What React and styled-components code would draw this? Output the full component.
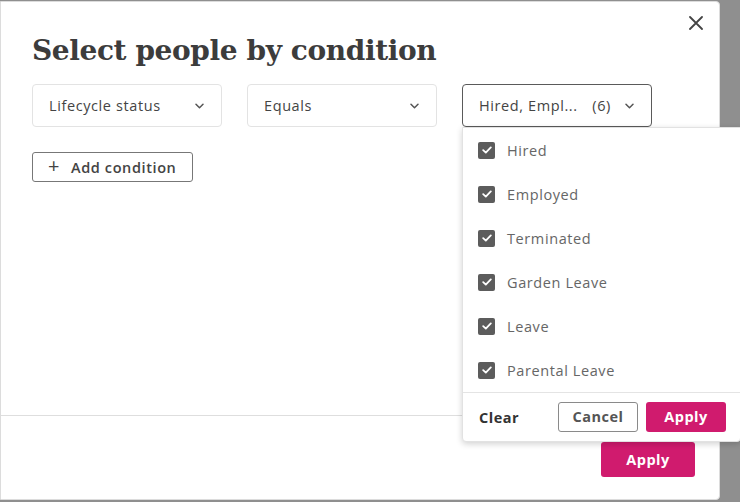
import React from "react";
import styled, { createGlobalStyle } from "styled-components";

const GlobalStyle = createGlobalStyle`
    html, body {
        margin: 0;
        padding: 0;
        background: #8f8f8f;
        font-family: "Open Sans", "Liberation Sans", sans-serif;
    }
    * {
        box-sizing: border-box;
    }
`;

const statuses = [
    "Hired",
    "Employed",
    "Terminated",
    "Garden Leave",
    "Leave",
    "Parental Leave",
];

const Chevron = () => (
    <svg width="9" height="6" viewBox="0 0 9 6" fill="none">
        <path
            d="M1 1.2l3.5 3.5 3.5-3.5"
            stroke="#555"
            strokeWidth="1.5"
            strokeLinecap="round"
            strokeLinejoin="round"
        />
    </svg>
);

const CloseIcon = () => (
    <svg width="14" height="14" viewBox="0 0 14 14" fill="none">
        <path
            d="M1 1l12 12M13 1L1 13"
            stroke="#444"
            strokeWidth="1.8"
            strokeLinecap="round"
        />
    </svg>
);

const Check = () => (
    <svg width="10" height="8" viewBox="0 0 10 8" fill="none">
        <path
            d="M1.2 4.2l2.6 2.4L8.8 1.4"
            stroke="#fff"
            strokeWidth="1.8"
            strokeLinecap="round"
            strokeLinejoin="round"
        />
    </svg>
);

const App = () => {
    return (
        <Page>
            <GlobalStyle />
            <Modal>
                <CloseBtn>
                    <CloseIcon />
                </CloseBtn>
                <Body>
                    <Title>Select people by condition</Title>
                    <Conditions>
                        <Select>
                            <span>Lifecycle status</span>
                            <Chevron />
                        </Select>
                        <Select>
                            <span>Equals</span>
                            <Chevron />
                        </Select>
                        <SelectWrap>
                            <Select open>
                                <span>Hired, Empl...</span>
                                <Count>(6)</Count>
                                <Chevron />
                            </Select>
                            <Popup>
                                <List>
                                    {statuses.map(s => (
                                        <Item key={s}>
                                            <Box>
                                                <Check />
                                            </Box>
                                            {s}
                                        </Item>
                                    ))}
                                </List>
                                <PopupFooter>
                                    <TextBtn>Clear</TextBtn>
                                    <BtnGroup>
                                        <OutlineBtn>Cancel</OutlineBtn>
                                        <PrimaryBtn small>Apply</PrimaryBtn>
                                    </BtnGroup>
                                </PopupFooter>
                            </Popup>
                        </SelectWrap>
                    </Conditions>
                    <AddBtn>
                        <Plus>+</Plus> Add condition
                    </AddBtn>
                </Body>
                <Footer>
                    <PrimaryBtn>Apply</PrimaryBtn>
                </Footer>
            </Modal>
        </Page>
    );
};

const Page = styled.div`
    width: 740px;
    height: 502px;
    padding-top: 1px;
    overflow: hidden;
`;

const Modal = styled.div`
    position: relative;
    width: 720px;
    height: 499px;
    background: #fff;
    border: 1px solid #dcdcdc;
    border-radius: 0 4px 4px 0;
    display: flex;
    flex-direction: column;
`;

const CloseBtn = styled.button`
    all: unset;
    position: absolute;
    top: 14px;
    right: 16px;
    width: 14px;
    height: 14px;
    display: flex;
    cursor: pointer;
`;

const Body = styled.div`
    flex: 1;
    padding: 31px 0 0 31px;
`;

const Title = styled.h1`
    margin: 0;
    font-family: "DejaVu Serif", "Liberation Serif", serif;
    font-weight: 700;
    font-size: 28px;
    line-height: 36px;
    color: #3c3c3c;
    letter-spacing: -0.4px;
`;

const Conditions = styled.div`
    display: flex;
    gap: 25px;
    margin-top: 15px;
`;

const SelectWrap = styled.div`
    position: relative;
`;

const Select = styled.div`
    width: 190px;
    height: 43px;
    padding: 0 17px 0 16px;
    display: flex;
    align-items: center;
    border: 1px solid ${props => (props.open ? "#5a5a5a" : "#e3e3e3")};
    border-radius: 4px;
    font-size: 14.5px;
    letter-spacing: 0.6px;
    color: #444;
    & > span:first-child {
        flex: 1;
        white-space: nowrap;
    }
`;

const Count = styled.span`
    margin-right: 14px;
`;

const Popup = styled.div`
    position: absolute;
    top: 100%;
    left: 0;
    width: 279px;
    background: #fff;
    border: 1px solid #e2e2e2;
    border-radius: 0 0 4px 4px;
    box-shadow: 0 2px 6px rgba(0, 0, 0, 0.18);
    z-index: 2;
`;

const List = styled.div`
    border-bottom: 1px solid #e4e4e4;
`;

const Item = styled.div`
    height: 44px;
    padding-left: 15px;
    display: flex;
    align-items: center;
    gap: 12px;
    font-size: 14.5px;
    letter-spacing: 0.6px;
    color: #666;
`;

const Box = styled.span`
    width: 17px;
    height: 17px;
    border-radius: 2px;
    background: #5c5c5c;
    display: flex;
    align-items: center;
    justify-content: center;
`;

const PopupFooter = styled.div`
    height: 48px;
    padding: 0 14px 0 16px;
    display: flex;
    align-items: center;
    justify-content: space-between;
`;

const TextBtn = styled.button`
    all: unset;
    font-size: 14.5px;
    font-weight: 700;
    letter-spacing: 0.5px;
    color: #333;
    cursor: pointer;
`;

const BtnGroup = styled.div`
    display: flex;
    gap: 8px;
`;

const OutlineBtn = styled.button`
    all: unset;
    width: 80px;
    height: 30px;
    border: 1px solid #8a8a8a;
    border-radius: 3px;
    text-align: center;
    line-height: 28px;
    box-sizing: border-box;
    font-size: 14.5px;
    font-weight: 700;
    letter-spacing: 0.5px;
    color: #555;
    cursor: pointer;
`;

const PrimaryBtn = styled.button`
    all: unset;
    box-sizing: border-box;
    width: ${props => (props.small ? "80px" : "94px")};
    height: ${props => (props.small ? "30px" : "35px")};
    line-height: ${props => (props.small ? "30px" : "35px")};
    background: #d01b6e;
    border-radius: 3px;
    text-align: center;
    font-size: 14.5px;
    font-weight: 700;
    letter-spacing: 0.5px;
    color: #fff;
    cursor: pointer;
`;

const AddBtn = styled.button`
    all: unset;
    box-sizing: border-box;
    margin-top: 25px;
    width: 161px;
    height: 30px;
    padding: 0 0 0 15px;
    display: flex;
    align-items: center;
    gap: 11px;
    border: 1px solid #777;
    border-radius: 3px;
    font-size: 14.5px;
    font-weight: 600;
    letter-spacing: 0.6px;
    color: #444;
    cursor: pointer;
`;

const Plus = styled.span`
    font-size: 20px;
    font-weight: 400;
    line-height: 1;
    margin-top: -2px;
`;

const Footer = styled.div`
    height: 84px;
    border-top: 1px solid #dedede;
    padding: 26px 24px 0 0;
    display: flex;
    justify-content: flex-end;
    align-items: flex-start;
`;

export default App;
